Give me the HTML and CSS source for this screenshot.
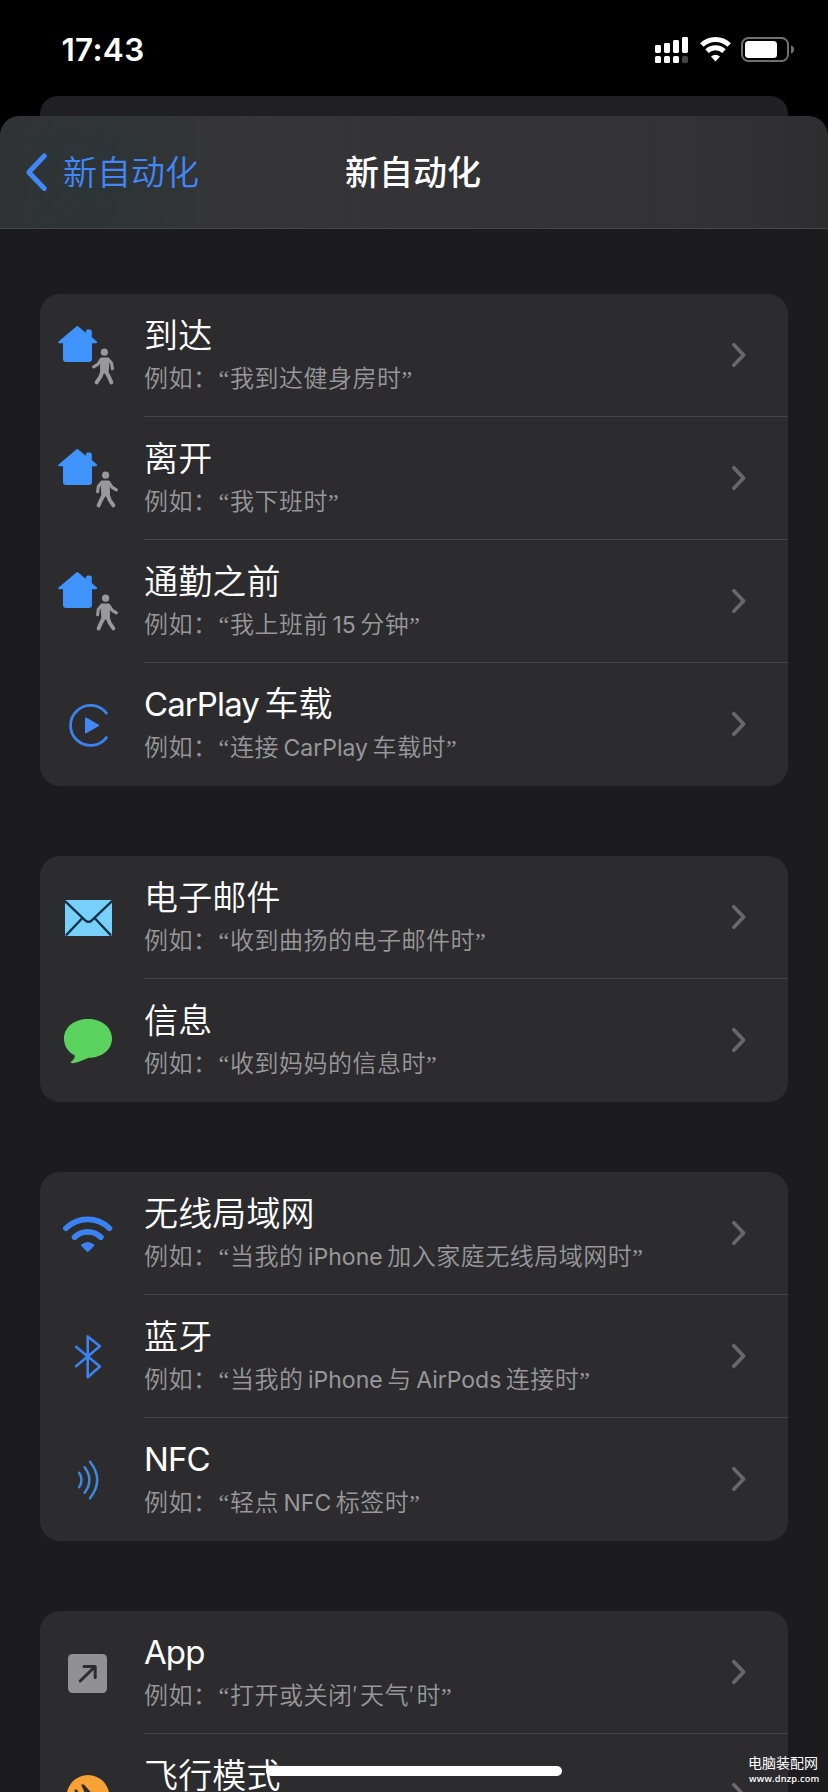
FILE: index.html
```html
<!DOCTYPE html>
<html lang="zh-CN">
<head>
<meta charset="utf-8">
<title>新自动化</title>
<link rel="stylesheet" href="styles.css">
</head>
<body>
<svg class="defs" width="0" height="0" aria-hidden="true">
  <symbol id="chevron" viewBox="0 0 16 26"><path d="M2.8 2.8 12.6 13 2.8 23.2" fill="none" stroke="#68686b" stroke-width="3.7" stroke-linecap="round" stroke-linejoin="round"/></symbol>
  <symbol id="house" viewBox="0 0 104 123">
    <path d="M37.3 33 46.9 41V37.4Q46.9 36.5 47.8 36.5H49.9Q50.8 36.5 50.8 37.4V43.6L56.2 48.2H51V65Q51 67 49 67H26Q24 67 24 65V48.2H19.2Z" fill="#3f93fb" stroke="#3f93fb" stroke-width="2" stroke-linejoin="round"/>
  </symbol>
  <symbol id="walker" viewBox="0 0 104 123">
    <circle cx="64.4" cy="58.2" r="3.6" fill="#99999b"/>
    <g fill="none" stroke="#99999b" stroke-linecap="round" stroke-linejoin="round">
      <path d="M61.3 65.2 57.8 70.4 53.6 72.8" stroke-width="3.1"/>
      <path d="M68.2 65.2 71.6 69.2 72.4 74.8" stroke-width="3.1"/>
      <path d="M62.6 77 60.3 83 56.6 88.4" stroke-width="3.9"/>
      <path d="M65.8 77 69 83 71.4 88.4" stroke-width="3.9"/>
      <path d="M62 65.3H67.6L66.8 77.5H62Z" fill="#99999b" stroke-width="3.8"/>
    </g>
  </symbol>
</svg>

<div class="phone">
  <header class="status">
    <time>17:43</time>
    <svg width="144" height="32" viewBox="652 34 144 32">
      <g fill="#fff">
        <rect x="655" y="45" width="6" height="8" rx="1.4"/><rect x="664" y="43" width="6" height="10" rx="1.4"/>
        <rect x="673" y="40" width="6" height="13" rx="1.4"/><rect x="682" y="37" width="6" height="16" rx="1.4"/>
        <rect x="655" y="56" width="6" height="7" rx="1.6"/><rect x="664" y="56" width="6" height="7" rx="1.6"/><rect x="673" y="56" width="6" height="7" rx="1.6"/>
        <rect x="682" y="56" width="6" height="7" rx="1.6" fill="#454545"/>
        <path d="M711 56.6Q715.5 52.8 720 56.6L715.5 61.4Z"/>
        <rect x="745" y="41" width="32" height="17" rx="3.5"/>
      </g>
      <path d="M701.8 45A20 20 0 0 1 729.2 45M707 51.2A12.5 12.5 0 0 1 724 51.2" fill="none" stroke="#fff" stroke-width="5"/>
      <rect x="742" y="38" width="46" height="23" rx="6.5" fill="none" stroke="#707070" stroke-width="2"/>
      <path d="M791 45.5Q794 46.4 794 49.5T791 53.5Z" fill="#707070"/>
    </svg>
  </header>
  <div class="backsheet"></div>
  <main class="sheet">
    <nav class="navbar">
      <a class="back"><svg width="24" height="40" viewBox="0 0 24 40"><path d="M20.3 4 4.8 20.2 20.3 36.4" fill="none" stroke="#4286f7" stroke-width="5" stroke-linecap="round" stroke-linejoin="round"/></svg><span>新自动化</span></a>
      <h1>新自动化</h1>
    </nav>
    <div class="list">
      <section class="card">
        <div class="row">
          <svg class="icon" viewBox="0 0 104 123"><use href="#house"/><use href="#walker"/></svg>
          <div class="cell"><div class="text"><h2>到达</h2><p>例如：<i>“</i>我到达健身房时”</p></div><svg class="chev"><use href="#chevron"/></svg></div>
        </div>
        <div class="row">
          <svg class="icon" viewBox="0 0 104 123"><use href="#house"/><use href="#walker" transform="translate(130 0) scale(-1 1)"/></svg>
          <div class="cell"><div class="text"><h2>离开</h2><p>例如：<i>“</i>我下班时”</p></div><svg class="chev"><use href="#chevron"/></svg></div>
        </div>
        <div class="row">
          <svg class="icon" viewBox="0 0 104 123"><use href="#house"/><use href="#walker" transform="translate(130 0) scale(-1 1)"/></svg>
          <div class="cell"><div class="text"><h2>通勤之前</h2><p>例如：<i>“</i>我上班前<b>15</b>分钟”</p></div><svg class="chev"><use href="#chevron"/></svg></div>
        </div>
        <div class="row">
          <svg class="icon" viewBox="0 0 104 123"><path d="M66.4 50.2A20 20 0 1 0 66.4 74.6" fill="none" stroke="#3c82ee" stroke-width="2.8" stroke-linecap="round"/><path d="M45.8 55.2 58.4 62.4 45.8 69.6Z" fill="#4388f5" stroke="#4388f5" stroke-width="1.6" stroke-linejoin="round"/></svg>
          <div class="cell"><div class="text"><h2 class="latin"><b>CarPlay</b>车载</h2><p>例如：<i>“</i>连接<b>CarPlay</b>车载时”</p></div><svg class="chev"><use href="#chevron"/></svg></div>
        </div>
      </section>
      <section class="card">
        <div class="row">
          <svg class="icon" viewBox="0 0 104 123"><rect x="25" y="44" width="47" height="36" rx="1.5" fill="#76d0fa"/><path d="M25 45.2 45.2 64.4Q48.5 67.4 51.8 64.4L72 45.2M26 79.4 42.2 62.2M71 79.4 54.8 62.2" fill="none" stroke="#12324a" stroke-width="2.3"/></svg>
          <div class="cell"><div class="text"><h2>电子邮件</h2><p>例如：<i>“</i>收到曲扬的电子邮件时”</p></div><svg class="chev"><use href="#chevron"/></svg></div>
        </div>
        <div class="row">
          <svg class="icon" viewBox="0 0 104 123"><path d="M48 40C61.5 40 72 48.2 72 59.4S62 78.6 48.5 78.8C44.5 80.4 38 84 31.8 84.2Q30 83.8 31.2 82.6C33.6 80.6 35 78.8 34.8 76.4C28 72.8 24 67 24 59.4C24 48.2 34.5 40 48 40Z" fill="#5cd35e"/></svg>
          <div class="cell"><div class="text"><h2>信息</h2><p>例如：<i>“</i>收到妈妈的信息时”</p></div><svg class="chev"><use href="#chevron"/></svg></div>
        </div>
      </section>
      <section class="card">
        <div class="row">
          <svg class="icon" viewBox="0 0 104 123"><path d="M26 56.2A31 31 0 0 1 69.4 56.2M34.6 65.2A19 19 0 0 1 60.8 65.2" fill="none" stroke="#3b82f2" stroke-width="5.8" stroke-linecap="round"/><path d="M41.4 72.4Q47.7 67.4 54 72.4Q54.8 73.2 54 74L48.7 79.6Q47.7 80.4 46.7 79.6L41.4 74Q40.6 73.2 41.4 72.4Z" fill="#3b82f2"/></svg>
          <div class="cell"><div class="text"><h2>无线局域网</h2><p>例如：<i>“</i>当我的<b>iPhone</b>加入家庭无线局域网时”</p></div><svg class="chev"><use href="#chevron"/></svg></div>
        </div>
        <div class="row">
          <svg class="icon" viewBox="0 0 104 123"><path d="M36 51.8 59.9 71.6 47.7 82.2V41.4L59.9 51.2 36 71.2" fill="none" stroke="#3b82ee" stroke-width="2.6" stroke-linecap="round" stroke-linejoin="round"/></svg>
          <div class="cell"><div class="text"><h2>蓝牙</h2><p>例如：<i>“</i>当我的<b>iPhone</b>与<b>AirPods</b>连接时”</p></div><svg class="chev"><use href="#chevron"/></svg></div>
        </div>
        <div class="row">
          <svg class="icon" viewBox="0 0 104 123"><path d="M39.2 54.8Q43.8 62 39.2 69.2M44.6 49.2Q54.2 62 44.6 74.8M50 43.8Q64.4 62 50 80.2" fill="none" stroke="#3e88e0" stroke-width="2.5" stroke-linecap="round"/></svg>
          <div class="cell"><div class="text"><h2 class="latin"><b>NFC</b></h2><p>例如：<i>“</i>轻点<b>NFC</b>标签时”</p></div><svg class="chev"><use href="#chevron"/></svg></div>
        </div>
      </section>
      <section class="card">
        <div class="row">
          <svg class="icon" viewBox="0 0 104 123"><rect x="28" y="43" width="39" height="39" rx="4.5" fill="#919193"/><path d="M40.2 70 55 55.6M44 55.4H55.2V66.4" fill="none" stroke="#2c2c2e" stroke-width="3" stroke-linecap="round" stroke-linejoin="round"/></svg>
          <div class="cell"><div class="text"><h2 class="latin"><b>App</b></h2><p>例如：<i>“</i>打开或关闭<u>′</u>天气<u>′</u>时”</p></div><svg class="chev"><use href="#chevron"/></svg></div>
        </div>
        <div class="row">
          <svg class="icon" viewBox="0 0 104 123"><circle cx="48" cy="62.4" r="21.4" fill="#f8a235"/><path d="M41.2 51Q42.6 49.4 44.4 51L52 59.5 61.5 62.5Q62 66 58 66L50 66 44 75 41.5 75 44 66 38 65.6 35.5 69 34 68 35.5 62.5 34.6 56Q36 54.6 37 56L39.8 60.2 45.5 60.2Z" fill="#2c2c2e"/></svg>
          <div class="cell"><div class="text"><h2>飞行模式</h2></div><svg class="chev"><use href="#chevron"/></svg></div>
        </div>
      </section>
    </div>
  </main>
  <div class="home"></div>
  <div class="mark"><span>电脑装配网</span><small>www.dnzp.com</small></div>
</div>
</body>
</html>
```

FILE: styles.css
```css
* { box-sizing: border-box; margin: 0; padding: 0; }
body { background: #000; font-family: Inter, "Noto Sans CJK SC", sans-serif; color: #fff; }
.defs { position: absolute; }
.phone { position: relative; width: 828px; height: 1792px; overflow: hidden; background: #000; }

.status { height: 96px; display: flex; justify-content: space-between; align-items: flex-start; padding: 34px 32px 0 61.5px; }
.status time { font-size: 31.5px; line-height: 32px; font-weight: 600; letter-spacing: .3px; }

.backsheet { height: 20px; margin: 0 40px; background: #202022; border-radius: 18px 18px 0 0; }
.sheet { height: 1676px; overflow: hidden; background: #1c1c1e; border-radius: 20px 20px 0 0; }

.navbar {
  height: 113px; display: grid; grid-template-columns: 1fr auto 1fr; align-items: center;
  border-bottom: 1px solid #464648;
  background: radial-gradient(ellipse 120px 110px at 90px 65px, #2b3536, rgba(43, 53, 54, 0)), linear-gradient(90deg, #313233, #353537 30%, #323234 90%, #2d2d2f);
}
.back { display: flex; align-items: center; gap: 15px; padding-left: 24px; font-size: 34px; line-height: 48px; color: #4286f7; font-weight: 350; }
.back span, .navbar h1 { padding-top: 2px; }
.navbar h1 { padding-right: 2px; font-size: 34px; line-height: 48px; font-weight: 500; }

.list { padding: 65px 40px 0; display: flex; flex-direction: column; gap: 70px; }
.card { background: #2c2c2e; border-radius: 20px; overflow: hidden; }
.row { display: flex; height: 123px; }
.icon { width: 104px; height: 123px; flex: none; }
.cell { flex: 1; display: flex; justify-content: space-between; border-bottom: 1px solid #454547; }
.row:last-child .cell { border-bottom: 0; }
.text { padding-top: 18px; white-space: nowrap; }
.text h2 { height: 48px; font-size: 34px; line-height: 48px; font-weight: 350; letter-spacing: .15px; }
.text h2.latin { line-height: 46px; }
.text p { margin-top: 2px; font-family: "Liberation Serif", "Noto Sans CJK SC", sans-serif; font-size: 24px; line-height: 34px; font-weight: 350; letter-spacing: .5px; color: #98989b; }
.text b { font-family: Inter, sans-serif; font-size: 23px; font-weight: 400; letter-spacing: 0; margin: 0 4.5px; }
.text h2 b { font-size: 33px; margin: 0 5.5px 0 0; letter-spacing: -.9px; }
.text i { display: inline-block; width: 12.5px; padding-left: 1px; font-style: normal; }
.text u { display: inline-block; width: 7.5px; font-family: Inter, sans-serif; text-decoration: none; }
.chev { width: 16px; height: 26px; margin: 48px 41px 0 0; flex: none; }

.home { position: absolute; left: 266px; top: 1766px; width: 296px; height: 10px; border-radius: 5px; background: #fff; }
.mark { position: absolute; left: 748px; top: 1753px; width: 76px; }
.mark span, .mark small { display: block; white-space: nowrap; }
.mark span { font-size: 14px; line-height: 20px; font-weight: 400; }
.mark small { padding-left: 1px; font: 600 9.2px/12px "Open Sans", sans-serif; letter-spacing: .2px; }
```
